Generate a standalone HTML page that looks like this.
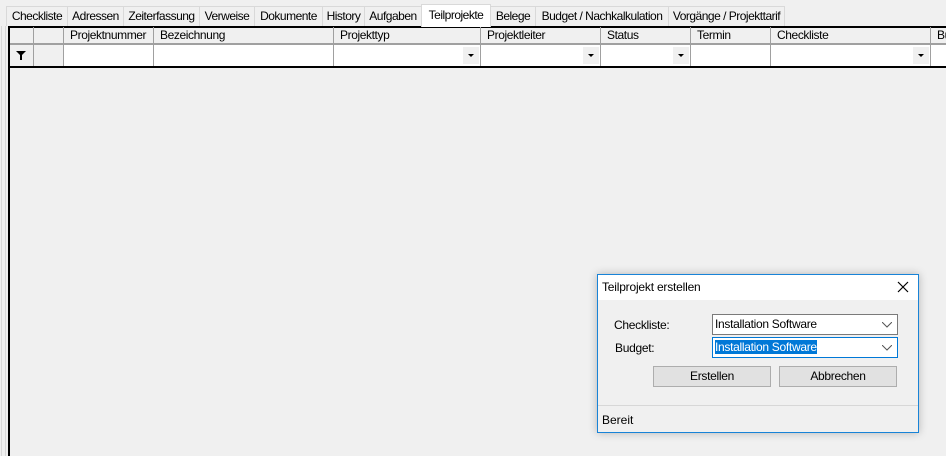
<!DOCTYPE html><html><head><style>
body{margin:0;width:946px;height:456px;background:#f0f0f0;font-family:"Liberation Sans",sans-serif;font-size:12px;position:relative;overflow:hidden;color:#000}
.a{position:absolute;box-sizing:border-box}
.tab{position:absolute;top:6px;height:20px;border:1px solid #d9d9d9;border-bottom:none;background:#f0f0f0;box-sizing:border-box;text-align:center;line-height:18px;letter-spacing:-0.5px;white-space:nowrap;overflow:hidden}
.h{position:absolute;top:27px;height:17px;border-right:1px solid #a0a0a0;box-sizing:border-box;padding-left:6px;line-height:17px;letter-spacing:-0.4px;white-space:nowrap;overflow:hidden}
.f{position:absolute;top:45px;height:22px;border-right:1px solid #a0a0a0;box-sizing:border-box;background:#fff}
.dd{position:absolute;right:1px;top:2px;width:16px;height:17px;background:#f0f0f0}
.dd:after{content:"";position:absolute;left:5px;top:7px;border-left:3px solid transparent;border-right:3px solid transparent;border-top:3px solid #000}
.cb{position:absolute;left:712px;width:186px;height:21px;border:1px solid #7a7a7a;background:#fff;box-sizing:border-box;padding-left:2px;line-height:19px;letter-spacing:-0.3px}
.cb svg{position:absolute;right:5px;top:7px}
.btn{position:absolute;top:366px;height:21px;width:118px;border:1px solid #adadad;background:#e1e1e1;box-sizing:border-box;text-align:center;line-height:19px;letter-spacing:-0.3px}
</style></head><body>
<div class="a" style="left:1px;top:26px;width:1px;height:430px;background:#d8d8d8"></div>
<div class="a" style="left:5px;top:26px;width:1px;height:430px;background:#d8d8d8"></div>
<div class="tab" style="left:6px;width:62px">Checkliste</div>
<div class="tab" style="left:67px;width:57px">Adressen</div>
<div class="tab" style="left:123px;width:77px">Zeiterfassung</div>
<div class="tab" style="left:199px;width:56px">Verweise</div>
<div class="tab" style="left:254px;width:69px">Dokumente</div>
<div class="tab" style="left:322px;width:43px">History</div>
<div class="tab" style="left:364px;width:58px">Aufgaben</div>
<div class="tab" style="left:421px;top:4px;height:23px;width:70px;background:#fff;z-index:2;line-height:20px">Teilprojekte</div>
<div class="tab" style="left:490px;width:46px">Belege</div>
<div class="tab" style="left:535px;width:134px">Budget / Nachkalkulation</div>
<div class="tab" style="left:668px;width:117px">Vorgänge / Projekttarif</div>
<div class="a" style="left:8px;top:26px;width:938px;height:2px;background:#000"></div>
<div class="a" style="left:8px;top:26px;width:2px;height:430px;background:#000"></div>
<div class="a" style="left:10px;top:43px;width:936px;height:2px;background:#a0a0a0"></div>
<div class="a" style="left:8px;top:66px;width:938px;height:2px;background:#000"></div>
<div class="h" style="left:10px;width:24px"></div>
<div class="h" style="left:34px;width:30px"></div>
<div class="h" style="left:64px;width:90px">Projektnummer</div>
<div class="h" style="left:154px;width:180px">Bezeichnung</div>
<div class="h" style="left:334px;width:147px">Projekttyp</div>
<div class="h" style="left:481px;width:120px">Projektleiter</div>
<div class="h" style="left:601px;width:90px">Status</div>
<div class="h" style="left:691px;width:80px">Termin</div>
<div class="h" style="left:771px;width:160px">Checkliste</div>
<div class="h" style="left:931px;width:30px">Bu</div>
<div class="f" style="left:10px;width:24px;background:#f0f0f0;top:45px;height:21px"><svg width="10" height="10" style="position:absolute;left:6px;top:6px"><path d="M0 0H10L6 4V9H4V4Z" fill="#000"/></svg></div>
<div class="f" style="left:34px;width:30px;background:#f0f0f0;height:21px"></div>
<div class="f" style="left:64px;width:90px;height:21px"></div>
<div class="f" style="left:154px;width:180px;height:21px"></div>
<div class="f" style="left:334px;width:147px;height:21px"><div class="dd"></div></div>
<div class="f" style="left:481px;width:120px;height:21px"><div class="dd"></div></div>
<div class="f" style="left:601px;width:90px;height:21px"><div class="dd"></div></div>
<div class="f" style="left:691px;width:80px;height:21px"></div>
<div class="f" style="left:771px;width:160px;height:21px"><div class="dd"></div></div>
<div class="f" style="left:931px;width:30px;height:21px"></div>
<div class="a" style="left:597px;top:274px;width:322px;height:159px;border:1px solid #1883d7;background:#f0f0f0;box-shadow:0 0 8px rgba(0,0,0,.25)"></div>
<div class="a" style="left:598px;top:275px;width:320px;height:25px;background:#fff"></div>
<div class="a" style="left:602px;top:280px;font-size:12px;letter-spacing:-0.2px">Teilprojekt erstellen</div>
<svg class="a" style="left:897px;top:281px" width="12" height="12"><path d="M1 1L11 11M11 1L1 11" stroke="#000" stroke-width="1.2"/></svg>
<div class="a" style="left:614px;top:318px;letter-spacing:-0.3px">Checkliste:</div>
<div class="a" style="left:615px;top:341px;letter-spacing:-0.3px">Budget:</div>
<div class="cb" style="top:314px">Installation Software<svg width="10" height="6"><path d="M0 0L5 5L10 0" fill="none" stroke="#555"/></svg></div>
<div class="cb" style="top:337px;border-color:#0078d7"><span style="background:#0078d7;color:#fff">Installation Software</span><svg width="10" height="6"><path d="M0 0L5 5L10 0" fill="none" stroke="#555"/></svg></div>
<div class="btn" style="left:653px">Erstellen</div>
<div class="btn" style="left:779px">Abbrechen</div>
<div class="a" style="left:598px;top:405px;width:320px;height:1px;background:#d7d7d7"></div>
<div class="a" style="left:602px;top:413px">Bereit</div>
</body></html>
